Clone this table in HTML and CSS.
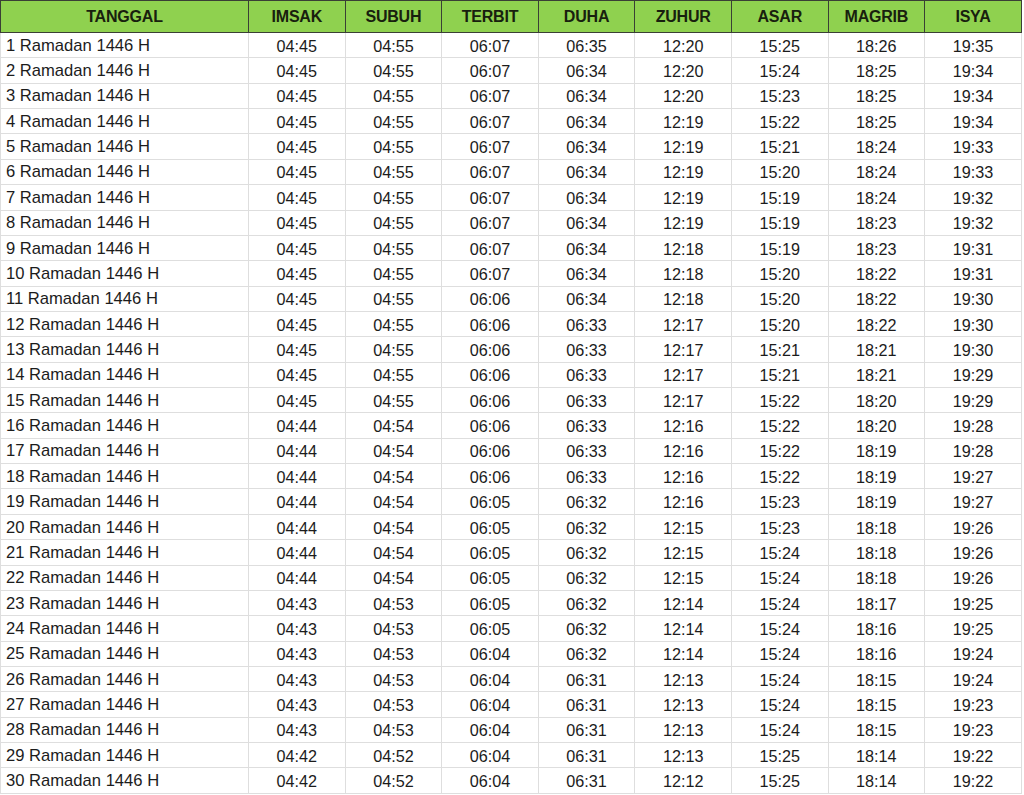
FILE: index.html
```html
<!DOCTYPE html>
<html lang="id">
<head>
<meta charset="utf-8">
<title>Jadwal Imsakiyah Ramadan 1446 H</title>
<link rel="stylesheet" href="styles.css">
</head>
<body>
<table class="jadwal">
<colgroup>
<col class="c-date"><col class="c-t"><col class="c-t"><col class="c-t"><col class="c-t"><col class="c-t"><col class="c-t"><col class="c-t"><col class="c-t">
</colgroup>
<thead>
<tr><th>TANGGAL</th><th>IMSAK</th><th>SUBUH</th><th>TERBIT</th><th>DUHA</th><th>ZUHUR</th><th>ASAR</th><th>MAGRIB</th><th>ISYA</th></tr>
</thead>
<tbody>
<tr><td>1 Ramadan 1446 H</td><td>04:45</td><td>04:55</td><td>06:07</td><td>06:35</td><td>12:20</td><td>15:25</td><td>18:26</td><td>19:35</td></tr>
<tr><td>2 Ramadan 1446 H</td><td>04:45</td><td>04:55</td><td>06:07</td><td>06:34</td><td>12:20</td><td>15:24</td><td>18:25</td><td>19:34</td></tr>
<tr><td>3 Ramadan 1446 H</td><td>04:45</td><td>04:55</td><td>06:07</td><td>06:34</td><td>12:20</td><td>15:23</td><td>18:25</td><td>19:34</td></tr>
<tr><td>4 Ramadan 1446 H</td><td>04:45</td><td>04:55</td><td>06:07</td><td>06:34</td><td>12:19</td><td>15:22</td><td>18:25</td><td>19:34</td></tr>
<tr><td>5 Ramadan 1446 H</td><td>04:45</td><td>04:55</td><td>06:07</td><td>06:34</td><td>12:19</td><td>15:21</td><td>18:24</td><td>19:33</td></tr>
<tr><td>6 Ramadan 1446 H</td><td>04:45</td><td>04:55</td><td>06:07</td><td>06:34</td><td>12:19</td><td>15:20</td><td>18:24</td><td>19:33</td></tr>
<tr><td>7 Ramadan 1446 H</td><td>04:45</td><td>04:55</td><td>06:07</td><td>06:34</td><td>12:19</td><td>15:19</td><td>18:24</td><td>19:32</td></tr>
<tr><td>8 Ramadan 1446 H</td><td>04:45</td><td>04:55</td><td>06:07</td><td>06:34</td><td>12:19</td><td>15:19</td><td>18:23</td><td>19:32</td></tr>
<tr><td>9 Ramadan 1446 H</td><td>04:45</td><td>04:55</td><td>06:07</td><td>06:34</td><td>12:18</td><td>15:19</td><td>18:23</td><td>19:31</td></tr>
<tr><td>10 Ramadan 1446 H</td><td>04:45</td><td>04:55</td><td>06:07</td><td>06:34</td><td>12:18</td><td>15:20</td><td>18:22</td><td>19:31</td></tr>
<tr><td>11 Ramadan 1446 H</td><td>04:45</td><td>04:55</td><td>06:06</td><td>06:34</td><td>12:18</td><td>15:20</td><td>18:22</td><td>19:30</td></tr>
<tr><td>12 Ramadan 1446 H</td><td>04:45</td><td>04:55</td><td>06:06</td><td>06:33</td><td>12:17</td><td>15:20</td><td>18:22</td><td>19:30</td></tr>
<tr><td>13 Ramadan 1446 H</td><td>04:45</td><td>04:55</td><td>06:06</td><td>06:33</td><td>12:17</td><td>15:21</td><td>18:21</td><td>19:30</td></tr>
<tr><td>14 Ramadan 1446 H</td><td>04:45</td><td>04:55</td><td>06:06</td><td>06:33</td><td>12:17</td><td>15:21</td><td>18:21</td><td>19:29</td></tr>
<tr><td>15 Ramadan 1446 H</td><td>04:45</td><td>04:55</td><td>06:06</td><td>06:33</td><td>12:17</td><td>15:22</td><td>18:20</td><td>19:29</td></tr>
<tr><td>16 Ramadan 1446 H</td><td>04:44</td><td>04:54</td><td>06:06</td><td>06:33</td><td>12:16</td><td>15:22</td><td>18:20</td><td>19:28</td></tr>
<tr><td>17 Ramadan 1446 H</td><td>04:44</td><td>04:54</td><td>06:06</td><td>06:33</td><td>12:16</td><td>15:22</td><td>18:19</td><td>19:28</td></tr>
<tr><td>18 Ramadan 1446 H</td><td>04:44</td><td>04:54</td><td>06:06</td><td>06:33</td><td>12:16</td><td>15:22</td><td>18:19</td><td>19:27</td></tr>
<tr><td>19 Ramadan 1446 H</td><td>04:44</td><td>04:54</td><td>06:05</td><td>06:32</td><td>12:16</td><td>15:23</td><td>18:19</td><td>19:27</td></tr>
<tr><td>20 Ramadan 1446 H</td><td>04:44</td><td>04:54</td><td>06:05</td><td>06:32</td><td>12:15</td><td>15:23</td><td>18:18</td><td>19:26</td></tr>
<tr><td>21 Ramadan 1446 H</td><td>04:44</td><td>04:54</td><td>06:05</td><td>06:32</td><td>12:15</td><td>15:24</td><td>18:18</td><td>19:26</td></tr>
<tr><td>22 Ramadan 1446 H</td><td>04:44</td><td>04:54</td><td>06:05</td><td>06:32</td><td>12:15</td><td>15:24</td><td>18:18</td><td>19:26</td></tr>
<tr><td>23 Ramadan 1446 H</td><td>04:43</td><td>04:53</td><td>06:05</td><td>06:32</td><td>12:14</td><td>15:24</td><td>18:17</td><td>19:25</td></tr>
<tr><td>24 Ramadan 1446 H</td><td>04:43</td><td>04:53</td><td>06:05</td><td>06:32</td><td>12:14</td><td>15:24</td><td>18:16</td><td>19:25</td></tr>
<tr><td>25 Ramadan 1446 H</td><td>04:43</td><td>04:53</td><td>06:04</td><td>06:32</td><td>12:14</td><td>15:24</td><td>18:16</td><td>19:24</td></tr>
<tr><td>26 Ramadan 1446 H</td><td>04:43</td><td>04:53</td><td>06:04</td><td>06:31</td><td>12:13</td><td>15:24</td><td>18:15</td><td>19:24</td></tr>
<tr><td>27 Ramadan 1446 H</td><td>04:43</td><td>04:53</td><td>06:04</td><td>06:31</td><td>12:13</td><td>15:24</td><td>18:15</td><td>19:23</td></tr>
<tr><td>28 Ramadan 1446 H</td><td>04:43</td><td>04:53</td><td>06:04</td><td>06:31</td><td>12:13</td><td>15:24</td><td>18:15</td><td>19:23</td></tr>
<tr><td>29 Ramadan 1446 H</td><td>04:42</td><td>04:52</td><td>06:04</td><td>06:31</td><td>12:13</td><td>15:25</td><td>18:14</td><td>19:22</td></tr>
<tr><td>30 Ramadan 1446 H</td><td>04:42</td><td>04:52</td><td>06:04</td><td>06:31</td><td>12:12</td><td>15:25</td><td>18:14</td><td>19:22</td></tr>
</tbody>
</table>
</body>
</html>
```
FILE: styles.css
```css
html, body {
  margin: 0;
  padding: 0;
  background: #ffffff;
}
body {
  font-family: "Liberation Sans", Arial, sans-serif;
  color: #1c1c1c;
}
.jadwal {
  border-collapse: collapse;
  table-layout: fixed;
  width: 1021px;
  margin: 0;
}
.c-date { width: 248px; }
.c-t { width: 96.6px; }
.jadwal th {
  background: #8fd14f;
  color: #18200e;
  font-weight: bold;
  font-size: 16px;
  height: 32px;
  padding: 0;
  text-align: center;
  border: 1px solid #3a3f35;
  box-sizing: border-box;
  letter-spacing: -0.2px;
}
.jadwal td {
  height: 25.37px;
  padding: 0;
  font-size: 16.2px;
  text-align: center;
  border: 1px solid #dedede;
  box-sizing: border-box;
  line-height: 18px;
  padding-top: 1px;
}
.jadwal td:first-child {
  text-align: left;
  padding-left: 5px;
  font-size: 16.6px;
}
.jadwal tbody tr:first-child td {
  border-top: 1px solid #3a3f35;
}
```
